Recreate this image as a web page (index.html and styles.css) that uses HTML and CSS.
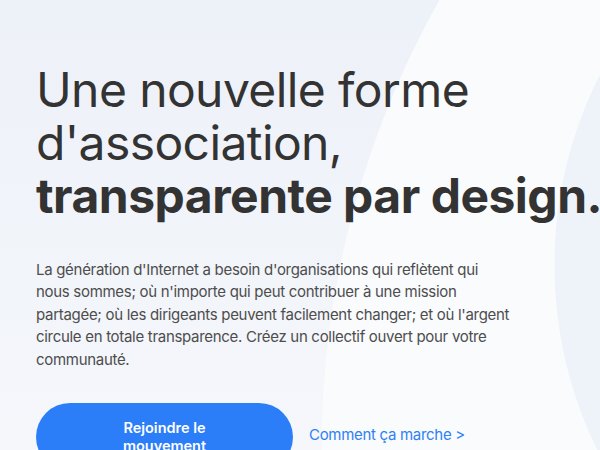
FILE: index.html
```html
<!DOCTYPE html>
<html lang="fr">
<head>
<meta charset="utf-8">
<title>Une nouvelle forme d'association</title>
<link rel="stylesheet" href="styles.css">
</head>
<body>
<main class="hero">
  <h1 class="hero-title">Une nouvelle forme<br>d'association,<br><strong>transparente par design.</strong></h1>
  <p class="hero-text">La génération d'Internet a besoin d'organisations qui reflètent qui nous sommes; où n'importe qui peut contribuer à une mission partagée; où les dirigeants peuvent facilement changer; et où l'argent circule en totale transparence. Créez un collectif ouvert pour votre communauté.</p>
  <div class="hero-actions">
    <a class="btn-primary" href="#">Rejoindre le mouvement</a>
    <a class="link-more" href="#">Comment ça marche &gt;</a>
  </div>
</main>
</body>
</html>
```

FILE: styles.css
```css
html, body {
  margin: 0;
  height: 100%;
}
body {
  font-family: Inter, "Noto Sans", sans-serif;
  overflow: hidden;
  background:
    radial-gradient(circle at 975px 265px, #eef2f9 0, #eef2f9 420px, rgba(238,242,249,0) 421px),
    radial-gradient(circle at 1239px 450px, #f9fbfd 0, #f9fbfd 917px, rgba(249,251,253,0) 918px),
    linear-gradient(180deg, #edf1f8 0%, #f5f7fb 100%);
}
.hero {
  padding: 63px 0 0 36px;
}
.hero-title {
  margin: 0;
  font-size: 48px;
  line-height: 53px;
  font-weight: 400;
  color: #333333;
  white-space: nowrap;
  letter-spacing: -0.6px;
}
.hero-title strong {
  font-weight: 700;
  letter-spacing: -0.5px;
}
.hero-text {
  margin: 37px 0 0;
  max-width: 478px;
  font-size: 15px;
  line-height: 22.4px;
  color: #4d4d4d;
  letter-spacing: -0.3px;
}
.hero-actions {
  margin-top: 32px;
  display: flex;
  align-items: center;
  gap: 16px;
}
.btn-primary {
  box-sizing: border-box;
  width: 257px;
  padding: 16px 70px;
  border-radius: 40px;
  background: #2b7ef8;
  color: #ffffff;
  font-size: 14.5px;
  font-weight: 600;
  line-height: 18px;
  text-align: center;
  text-decoration: none;
}
.link-more {
  color: #2f80f6;
  font-size: 15px;
  letter-spacing: -0.3px;
  text-decoration: none;
  margin-top: -6px;
}
```
